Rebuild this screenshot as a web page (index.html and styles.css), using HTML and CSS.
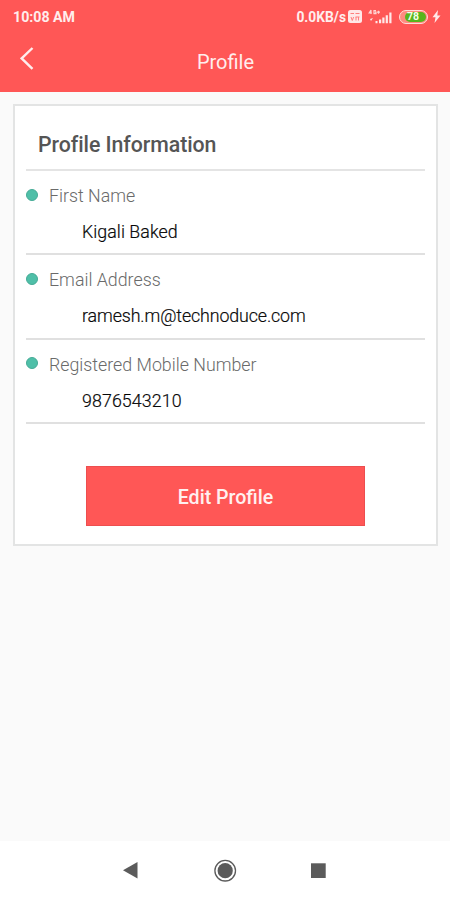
FILE: index.html
```html
<!DOCTYPE html>
<html lang="en">
<head>
<meta charset="utf-8">
<title>Profile</title>
<link rel="stylesheet" href="styles.css">
</head>
<body>
<header class="header">
  <div class="status">
    <span class="time">10:08 AM</span>
    <div class="indicators">
      <span class="speed">0.0KB/s</span>
      <svg class="volte" width="14" height="13" viewBox="0 0 14 13"><rect width="14" height="13" rx="2.5" fill="#ffe8e8"/><path d="M2.5 3.5h3.5M7.5 3.5h4M3 7l1.3 3.5L5.6 7M8 7v3.5M10.5 7v3.5M7.5 7h4" fill="none" stroke="#ff7f7d" stroke-width="1"/></svg>
      <svg class="signal" width="25" height="16" viewBox="0 0 25 16"><path d="M3 1L1.2 3.8h2.6M3 1v4M8 1.6H6v3h2v-1.4H7M9 3.2h3M10.5 1.7v3" fill="none" stroke="#ffd5d4" stroke-width="1.2"/><path d="M2 10l3-1-2 3M7.5 12h2v2.3h-2zM11 10.5h2.2v3.8H11zM14.3 8.5h2.2v5.8h-2.2zM17.7 6.2h2.2v8.1h-2.2zM21.3 3.5h2.2v10.8h-2.2z" fill="#ffe8e8"/></svg>
      <div class="battery"><span class="charge">78</span></div>
      <svg class="bolt" width="9" height="13" viewBox="0 0 9 13"><path d="M6 0L.5 7.2h3L2.5 13 8.5 5.4h-3.2z" fill="#ffe8e8"/></svg>
    </div>
  </div>
  <div class="toolbar">
    <svg class="back" width="14" height="23" viewBox="0 0 14 23"><path d="M12.5 1L1.7 11.4 12.5 21.8" fill="none" stroke="#ffeded" stroke-width="2.4"/></svg>
    <h1 class="title">Profile</h1>
  </div>
</header>
<main class="content">
  <section class="card">
    <h2 class="heading">Profile Information</h2>
    <div class="field">
      <div class="label"><i class="dot"></i><span>First Name</span></div>
      <div class="value">Kigali Baked</div>
    </div>
    <div class="field">
      <div class="label"><i class="dot"></i><span>Email Address</span></div>
      <div class="value email">ramesh.m@technoduce.com</div>
    </div>
    <div class="field">
      <div class="label"><i class="dot"></i><span>Registered Mobile Number</span></div>
      <div class="value phone">9876543210</div>
    </div>
    <button class="edit">Edit Profile</button>
  </section>
</main>
<nav class="nav">
  <svg width="450" height="59" viewBox="0 0 450 59"><path d="M137.5 21v16.5L123 29.3z" fill="#5b5b5b"/><circle cx="225.2" cy="29.7" r="10.3" fill="none" stroke="#5b5b5b" stroke-width="1.3"/><circle cx="225.2" cy="29.7" r="7.6" fill="#5b5b5b"/><rect x="311" y="22.3" width="14.7" height="14.7" fill="#5b5b5b"/></svg>
</nav>
</body>
</html>
```

FILE: styles.css
```css
* { box-sizing: border-box; }
body {
  margin: 0;
  height: 900px;
  display: flex;
  flex-direction: column;
  overflow: hidden;
  background: #fafafa;
  font-family: Roboto, "Liberation Sans", sans-serif;
}
.header { height: 91.5px; flex: none; background: #ff5756; color: #ffeded; }
.status {
  height: 33px;
  padding: 0 9px 0 13px;
  display: flex;
  justify-content: space-between;
  align-items: center;
}
.time { font-size: 14.2px; font-weight: 700; }
.indicators { display: flex; align-items: center; }
.speed { font-size: 13.8px; font-weight: 700; }
.volte { margin-left: 2px; }
.signal { margin-left: 6px; }
.battery {
  width: 29px;
  height: 14px;
  margin-left: 6px;
  padding: 1px 1px 1px 6px;
  border: 1.5px solid #ffdcd8;
  border-radius: 7px;
  background: #ff8b80;
}
.charge {
  display: block;
  height: 10px;
  margin-left: -1px;
  border-radius: 5px;
  background: #58b51c;
  color: #f3ffe9;
  font-size: 10.5px;
  font-weight: 700;
  line-height: 10px;
  text-indent: 2px;
}
.bolt { margin-left: 4px; }
.toolbar {
  height: 50px;
  padding: 0 20px;
  display: grid;
  grid-template-columns: 14px 1fr 14px;
  align-items: center;
}
.title { margin: 8px 0 0 1px; font-size: 20px; font-weight: 400; line-height: 24px; text-align: center; }
.content { flex: 1; padding: 12.5px 12px 0 13px; }
.card {
  height: 441.5px;
  padding: 9.5px 11px 0;
  border: 2px solid #e3e4e4;
  background: #fff;
  display: flex;
  flex-direction: column;
}
.heading {
  height: 55.5px;
  margin: 0;
  padding: 16.5px 0 0 12px;
  border-bottom: 2px solid #e4e4e4;
  color: #555;
  font-size: 21.3px;
  font-weight: 500;
  line-height: 26px;
  letter-spacing: -.06px;
}
.field { height: 84.4px; border-bottom: 2px solid #e0e0e0; padding-top: 12.4px; }
.label { height: 24px; display: flex; align-items: center; color: #6a6a6a; font-size: 17.8px; font-weight: 300; }
.dot { width: 12px; height: 12px; margin: -1.6px 11px 0 0; border-radius: 50%; background: #4fbfa8; border: 1px solid #45ab96; }
.value { padding: 12.5px 0 0 56px; color: #000; font-size: 17.8px; font-weight: 300; line-height: 24px; letter-spacing: .06px; -webkit-text-stroke: .2px #222; }
.email { letter-spacing: -.1px; }
.phone { letter-spacing: .1px; }
.edit {
  width: 279px;
  height: 60px;
  margin: 42px auto 0;
  padding: 3px 0 0;
  border: 1px solid #ed4e4f;
  background: #ff5756;
  color: #fff0f0;
  font: 500 19.6px Roboto, "Liberation Sans", sans-serif;
}
.nav { height: 59px; flex: none; background: #fff; }
.nav svg { display: block; }
```
